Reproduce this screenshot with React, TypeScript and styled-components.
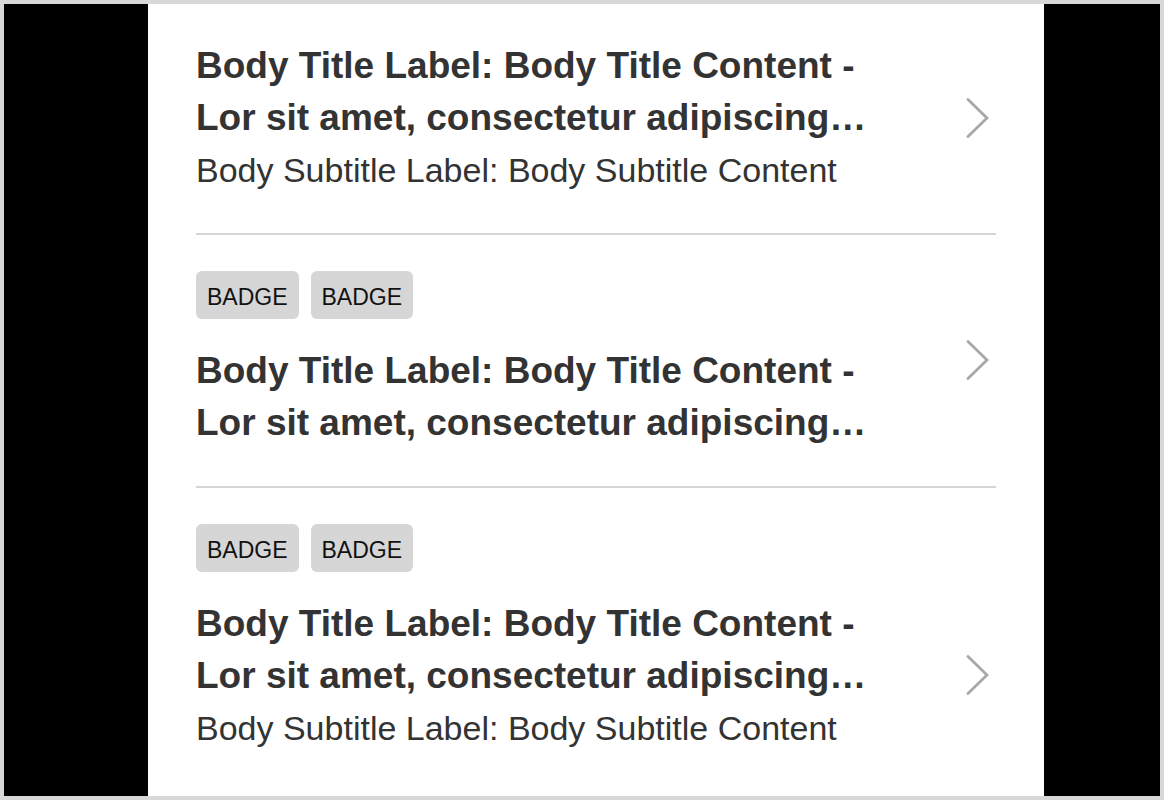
import React from 'react';
import styled, { createGlobalStyle } from 'styled-components';

type Item = {
  badges: string[];
  title: string;
  subtitle?: string;
};

const items: Item[] = [
  {
    badges: [],
    title:
      'Body Title Label: Body Title Content - Lor sit amet, consectetur adipiscing elit, sed do eiusmod tempor',
    subtitle: 'Body Subtitle Label: Body Subtitle Content',
  },
  {
    badges: ['BADGE', 'BADGE'],
    title:
      'Body Title Label: Body Title Content - Lor sit amet, consectetur adipiscing elit, sed do eiusmod tempor',
  },
  {
    badges: ['BADGE', 'BADGE'],
    title:
      'Body Title Label: Body Title Content - Lor sit amet, consectetur adipiscing elit, sed do eiusmod tempor',
    subtitle: 'Body Subtitle Label: Body Subtitle Content',
  },
];

const Chevron = () => (
  <ChevronIcon width="24" height="40" viewBox="0 0 24 40" aria-hidden="true">
    <polyline
      points="2,1.5 21,20 2,38.5"
      fill="none"
      stroke="#a8a8a8"
      strokeWidth="2.8"
      strokeLinecap="round"
      strokeLinejoin="miter"
    />
  </ChevronIcon>
);

export default function App() {
  return (
    <>
      <GlobalStyle />
      <Frame>
        <Panel>
          {items.map((item, i) => (
            <Row key={i} $last={i === items.length - 1}>
              <TextBlock>
                {item.badges.length > 0 && (
                  <BadgeRow>
                    {item.badges.map((b, j) => (
                      <Badge key={j}>{b}</Badge>
                    ))}
                  </BadgeRow>
                )}
                <Title>{item.title}</Title>
                {item.subtitle && <Subtitle>{item.subtitle}</Subtitle>}
              </TextBlock>
              <Chevron />
            </Row>
          ))}
        </Panel>
      </Frame>
    </>
  );
}

const GlobalStyle = createGlobalStyle`
  html, body {
    margin: 0;
    padding: 0;
    overflow: hidden;
    background: #ffffff;
  }
  body {
    font-family: "Liberation Sans", Arial, sans-serif;
  }
`;

const Frame = styled.div`
  box-sizing: border-box;
  width: 1164px;
  height: 800px;
  border: 4px solid #d8d8d8;
  background: #000000;
  display: flex;
  overflow: hidden;
`;

const Panel = styled.div`
  box-sizing: border-box;
  width: 896px;
  margin-left: 144px;
  padding: 0 48px;
  background: #ffffff;
  display: flex;
  flex-direction: column;
  flex-shrink: 0;
`;

/* the last row runs on below the visible frame */
const Row = styled.div<{ $last: boolean }>`
  display: flex;
  align-items: center;
  padding: 36px 0 37px;
  min-height: ${({ $last }) => ($last ? '302px' : '0')};
  border-bottom: 2px solid #d5d5d5;
  flex-shrink: 0;

  &:last-child {
    border-bottom: none;
  }
`;

const TextBlock = styled.div`
  flex: 1;
  max-width: 690px;
  display: flex;
  flex-direction: column;
  align-self: flex-start;
`;

const BadgeRow = styled.div`
  display: flex;
  gap: 12px;
  margin-bottom: 26px;
`;

const Badge = styled.span`
  box-sizing: border-box;
  height: 48px;
  padding: 5px 11px 0;
  display: inline-flex;
  align-items: center;
  border-radius: 6px;
  background: #d6d6d6;
  color: #111111;
  font-size: 23px;
  line-height: 1;
`;

const Title = styled.div`
  font-size: 37px;
  font-weight: 700;
  line-height: 52px;
  color: #333333;
  display: -webkit-box;
  -webkit-line-clamp: 2;
  -webkit-box-orient: vertical;
  overflow: hidden;
`;

const Subtitle = styled.div`
  font-size: 34px;
  line-height: 52px;
  color: #333333;
  white-space: nowrap;
`;

const ChevronIcon = styled.svg`
  margin-left: auto;
  margin-right: 6px;
  flex-shrink: 0;
`;
